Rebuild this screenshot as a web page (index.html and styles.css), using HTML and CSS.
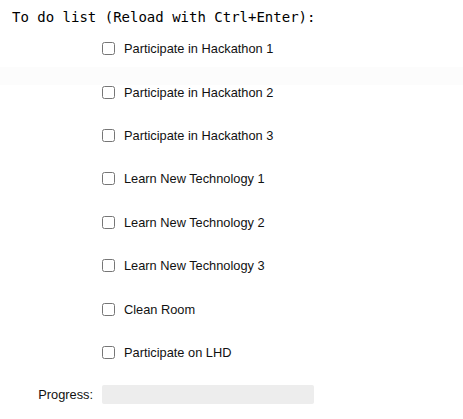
FILE: index.html
```html
<!DOCTYPE html>
<html>
<head>
<meta charset="utf-8">
<link rel="stylesheet" href="styles.css">
</head>
<body>
<div class="title">To do list (Reload with Ctrl+Enter):</div>
<div class="list">
  <label class="row"><input type="checkbox" class="box"><span>Participate in Hackathon 1</span></label>
  <label class="row"><input type="checkbox" class="box"><span>Participate in Hackathon 2</span></label>
  <label class="row"><input type="checkbox" class="box"><span>Participate in Hackathon 3</span></label>
  <label class="row"><input type="checkbox" class="box"><span>Learn New Technology 1</span></label>
  <label class="row"><input type="checkbox" class="box"><span>Learn New Technology 2</span></label>
  <label class="row"><input type="checkbox" class="box"><span>Learn New Technology 3</span></label>
  <label class="row"><input type="checkbox" class="box"><span>Clean Room</span></label>
  <label class="row"><input type="checkbox" class="box"><span>Participate on LHD</span></label>
</div>
<div class="progress">
  <span class="plabel">Progress:</span>
  <div class="bar"></div>
</div>
</body>
</html>
```
FILE: styles.css
```css
html, body {
  margin: 0;
  padding: 0;
  background: #fff;
}
body {
  font-family: "Liberation Sans", Arial, sans-serif;
  font-size: 12.8px;
  color: #111;
}
.title {
  font-family: "DejaVu Sans Mono", monospace;
  font-size: 14px;
  line-height: 17px;
  padding: 9px 0 0 12px;
  height: 17px;
  color: #000;
}
.list {
  display: flex;
  flex-direction: column;
  padding-top: 1px;
  background: linear-gradient(to bottom, transparent 41px, #fcfcfc 41px, #fcfcfc 59px, transparent 59px);
}
.row {
  display: flex;
  align-items: center;
  height: 43.4px;
  padding-left: 102px;
}
.box {
  margin: 0 9px 0 0;
  width: 13px;
  height: 13px;
}
.progress {
  display: flex;
  align-items: center;
  margin-top: 11px;
}
.plabel {
  width: 93px;
  text-align: right;
  margin-right: 9px;
}
.bar {
  width: 212px;
  height: 19px;
  background: #ededed;
  border-radius: 2px;
}
```
